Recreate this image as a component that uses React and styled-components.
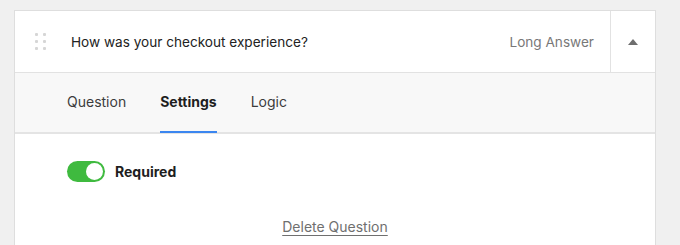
import React, { useState } from 'react'
import styled, { createGlobalStyle } from 'styled-components'

const GlobalStyle = createGlobalStyle`
  body {
    margin: 0;
    background: #f0f0f0;
    font-family: Inter, "Noto Sans", Arial, sans-serif;
    -webkit-font-smoothing: antialiased;
  }
`

const Page = styled.div`
  padding: 10px 24px 0 14px;
  height: 245px;
  box-sizing: border-box;
  overflow: hidden;
`

const Card = styled.div`
  background: #fff;
  border: 1px solid #dedede;
  width: 642px;
  box-sizing: border-box;
`

const Header = styled.div`
  display: flex;
  align-items: stretch;
  height: 61px;
  border-bottom: 1px solid #e2e2e2;
`

const Handle = styled.div`
  display: grid;
  grid-template-columns: repeat(2, 3px);
  grid-auto-rows: 3px;
  gap: 4px 5px;
  align-content: center;
  box-sizing: border-box;
  padding-left: 20px;
  width: 34px;
  span {
    background: #d6d6d6;
    border-radius: 1px;
  }
`

const Title = styled.div`
  flex: 1;
  display: flex;
  align-items: center;
  padding-left: 22px;
  font-size: 13.6px;
  color: #222;
`

const Type = styled.div`
  display: flex;
  align-items: center;
  padding-right: 16px;
  font-size: 13.6px;
  color: #787878;
`

const Toggle = styled.button`
  width: 45px;
  border: 0;
  border-left: 1px solid #e2e2e2;
  background: transparent;
  display: flex;
  align-items: center;
  justify-content: center;
  padding: 0;
  cursor: pointer;
`

const Tabs = styled.div`
  display: flex;
  gap: 34px;
  padding-left: 52px;
  height: 59px;
  background: #f8f8f8;
  border-bottom: 2px solid #e4e4e4;
`

const Tab = styled.div`
  display: flex;
  align-items: center;
  padding-bottom: 3px;
  font-size: 14px;
  color: ${p => (p.$active ? '#1e1e1e' : '#3c3c3c')};
  font-weight: ${p => (p.$active ? 700 : 400)};
  box-shadow: ${p => (p.$active ? 'inset 0 -2px 0 #3b86f0' : 'none')};
  margin-bottom: -1px;
`

const Body = styled.div`
  padding: 27px 0 0 52px;
  height: 120px;
`

const SwitchRow = styled.label`
  display: flex;
  align-items: center;
  gap: 10px;
  font-size: 14px;
  font-weight: 700;
  color: #1e1e1e;
`

const Switch = styled.span`
  position: relative;
  width: 38px;
  height: 21px;
  border-radius: 11px;
  background: ${p => (p.$on ? '#3fba3f' : '#ccc')};
  &::after {
    content: '';
    position: absolute;
    top: 2px;
    left: ${p => (p.$on ? '19px' : '2px')};
    width: 17px;
    height: 17px;
    border-radius: 50%;
    background: #fff;
  }
`

const DeleteLink = styled.a`
  display: block;
  width: max-content;
  margin: 36px auto 0;
  padding-right: 52px;
  font-size: 14px;
  color: #6f6f6f;
  text-decoration: underline;
  text-underline-offset: 3px;
`

const App = () => {
  const [required, setRequired] = useState(true)
  return (
    <Page>
      <GlobalStyle />
      <Card>
        <Header>
          <Handle>
            {[0, 1, 2, 3, 4, 5].map(i => <span key={i} />)}
          </Handle>
          <Title>How was your checkout experience?</Title>
          <Type>Long Answer</Type>
          <Toggle aria-label="Collapse">
            <svg width="10" height="6" viewBox="0 0 10 6">
              <path d="M5 0 L10 6 L0 6 Z" fill="#6e6e6e" />
            </svg>
          </Toggle>
        </Header>
        <Tabs>
          <Tab>Question</Tab>
          <Tab $active>Settings</Tab>
          <Tab>Logic</Tab>
        </Tabs>
        <Body>
          <SwitchRow onClick={() => setRequired(!required)}>
            <Switch $on={required} />
            Required
          </SwitchRow>
          <DeleteLink>Delete Question</DeleteLink>
        </Body>
      </Card>
    </Page>
  )
}

export default App
